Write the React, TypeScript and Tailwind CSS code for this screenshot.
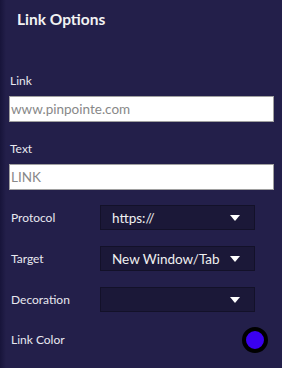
import React from 'react';

const Caret = () => (
  <svg width="12" height="8" viewBox="0 0 12 8" className="shrink-0">
    <path d="M1 1h10L6 7z" fill="#fff" />
  </svg>
);

const SelectRow = ({ label, value }: { label: string; value: string }) => (
  <div className="flex items-center h-[25px]">
    <span className="w-[100px] pl-[11px] text-[12px] text-[#e8e8f0]">{label}</span>
    <div className="w-[155px] h-[25px] bg-[#1b1838] border border-[#131129] flex items-center justify-between pl-[11px] pr-[13px] text-[13.5px] text-[#f0f0f0]">
      <span>{value}</span>
      <Caret />
    </div>
  </div>
);

export default function App() {
  return (
    <div
      className="w-[282px] h-[368px] bg-[#231f4a] relative overflow-hidden"
      style={{ fontFamily: 'Lato, "Open Sans", sans-serif' }}
    >
      <div className="absolute left-0 top-0 bottom-0 w-[6px] bg-gradient-to-r from-[#17143a] to-transparent" />
      <div className="pl-[17px] pt-[8px] text-[15.5px] font-bold text-[#f2f2f2]">Link Options</div>

      <div className="mt-[41px] px-[9px] flex flex-col">
        <span className="pl-[1px] text-[12px] text-[#e8e8f0]">Link</span>
        <div className="mt-[6px] w-[265px] h-[26px] bg-white border border-[#a0a0a0] flex items-center pl-[1px] text-[13.5px] text-[#888]">
          www.pinpointe.com
        </div>
        <span className="mt-[18px] pl-[1px] text-[12px] text-[#e8e8f0]">Text</span>
        <div className="mt-[6px] w-[265px] h-[26px] bg-white border border-[#a0a0a0] flex items-center pl-[1px] text-[13.5px] text-[#888]">
          LINK
        </div>
      </div>

      <div className="mt-[15px] flex flex-col gap-[16px]">
        <SelectRow label="Protocol" value="https://" />
        <SelectRow label="Target" value="New Window/Tab" />
        <SelectRow label="Decoration" value="" />
      </div>

      <div className="mt-[15px] flex items-center justify-between pl-[11px] pr-[14px]">
        <span className="text-[12px] text-[#e8e8f0]">Link Color</span>
        <div className="w-[26px] h-[26px] rounded-full bg-[#3a00f0] border-[4px] border-black" />
      </div>
    </div>
  );
}
